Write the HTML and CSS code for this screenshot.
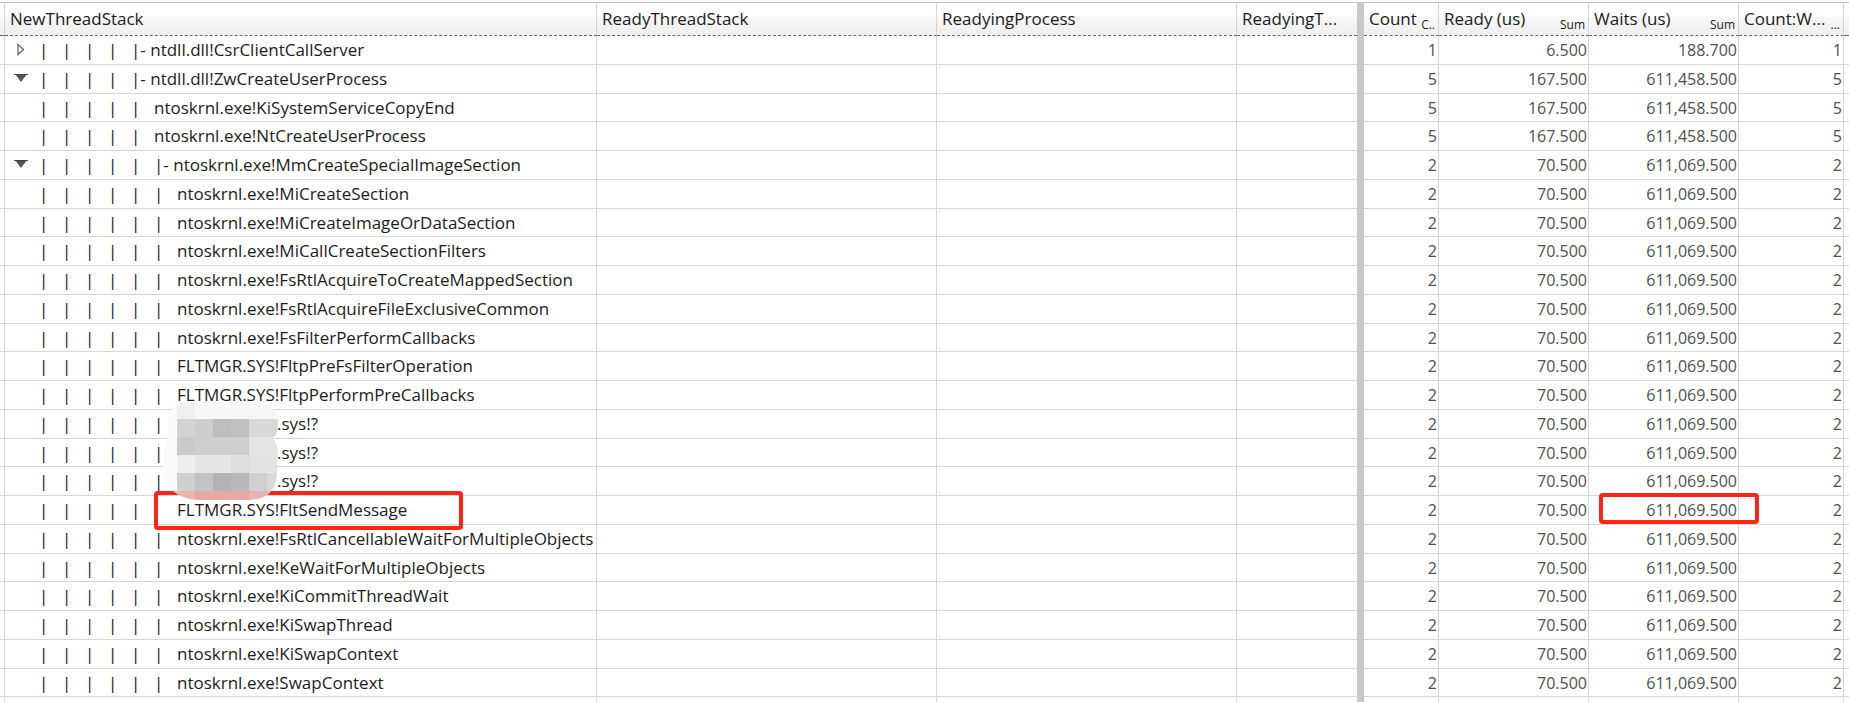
FILE: index.html
```html
<!DOCTYPE html>
<html lang="en">
<head>
<meta charset="utf-8">
<title>Thread stacks</title>
<link rel="stylesheet" href="styles.css">
</head>
<body>
<table class="grid">
<colgroup>
<col class="w-edge"><col class="w-stack"><col class="w-ready-stack"><col class="w-process"><col class="w-thread"><col class="w-split"><col class="w-count"><col class="w-time"><col class="w-time"><col class="w-count-waits"><col class="w-edge">
</colgroup>
<thead>
<tr>
<th></th>
<th scope="col">NewThreadStack</th>
<th scope="col">ReadyThreadStack</th>
<th scope="col">ReadyingProcess</th>
<th scope="col" class="flush">ReadyingT...</th>
<th class="split"></th>
<th scope="col"><div class="head">Count<small>C..</small></div></th>
<th scope="col"><div class="head">Ready (us)<small>Sum</small></div></th>
<th scope="col"><div class="head">Waits (us)<small>Sum</small></div></th>
<th scope="col"><div class="head">Count:W...<small>...</small></div></th>
<th class="flush"></th>
</tr>
</thead>
<tbody>
<tr><td></td><td><div class="node"><button class="toggle" aria-label="Expand"><svg width="14" height="14" viewBox="0 0 14 14"><path d="M4 1.500v10l5.500-5z" fill="#fff" stroke="#666" stroke-width="1.3"/></svg></button><i>|</i><i>|</i><i>|</i><i>|</i><span>|- ntdll.dll!CsrClientCallServer</span></div></td><td></td><td></td><td class="flush"></td><td class="split"></td><td>1</td><td>6.500</td><td>188.700</td><td>1</td><td class="flush"></td></tr>
<tr><td></td><td><div class="node"><button class="toggle" aria-label="Collapse"><svg width="14" height="14" viewBox="0 0 14 14"><path d="M1 2h12L7 10z" fill="#555"/><path d="M0 2.500h14" stroke="#444"/></svg></button><i>|</i><i>|</i><i>|</i><i>|</i><span>|- ntdll.dll!ZwCreateUserProcess</span></div></td><td></td><td></td><td class="flush"></td><td class="split"></td><td>5</td><td>167.500</td><td>611,458.500</td><td>5</td><td class="flush"></td></tr>
<tr><td></td><td><div class="node"><i>|</i><i>|</i><i>|</i><i>|</i><i>|</i><span>ntoskrnl.exe!KiSystemServiceCopyEnd</span></div></td><td></td><td></td><td class="flush"></td><td class="split"></td><td>5</td><td>167.500</td><td>611,458.500</td><td>5</td><td class="flush"></td></tr>
<tr><td></td><td><div class="node"><i>|</i><i>|</i><i>|</i><i>|</i><i>|</i><span>ntoskrnl.exe!NtCreateUserProcess</span></div></td><td></td><td></td><td class="flush"></td><td class="split"></td><td>5</td><td>167.500</td><td>611,458.500</td><td>5</td><td class="flush"></td></tr>
<tr><td></td><td><div class="node"><button class="toggle" aria-label="Collapse"><svg width="14" height="14" viewBox="0 0 14 14"><path d="M1 2h12L7 10z" fill="#555"/><path d="M0 2.500h14" stroke="#444"/></svg></button><i>|</i><i>|</i><i>|</i><i>|</i><i>|</i><span>|- ntoskrnl.exe!MmCreateSpecialImageSection</span></div></td><td></td><td></td><td class="flush"></td><td class="split"></td><td>2</td><td>70.500</td><td>611,069.500</td><td>2</td><td class="flush"></td></tr>
<tr><td></td><td><div class="node"><i>|</i><i>|</i><i>|</i><i>|</i><i>|</i><i>|</i><span>ntoskrnl.exe!MiCreateSection</span></div></td><td></td><td></td><td class="flush"></td><td class="split"></td><td>2</td><td>70.500</td><td>611,069.500</td><td>2</td><td class="flush"></td></tr>
<tr><td></td><td><div class="node"><i>|</i><i>|</i><i>|</i><i>|</i><i>|</i><i>|</i><span>ntoskrnl.exe!MiCreateImageOrDataSection</span></div></td><td></td><td></td><td class="flush"></td><td class="split"></td><td>2</td><td>70.500</td><td>611,069.500</td><td>2</td><td class="flush"></td></tr>
<tr><td></td><td><div class="node"><i>|</i><i>|</i><i>|</i><i>|</i><i>|</i><i>|</i><span>ntoskrnl.exe!MiCallCreateSectionFilters</span></div></td><td></td><td></td><td class="flush"></td><td class="split"></td><td>2</td><td>70.500</td><td>611,069.500</td><td>2</td><td class="flush"></td></tr>
<tr><td></td><td><div class="node"><i>|</i><i>|</i><i>|</i><i>|</i><i>|</i><i>|</i><span>ntoskrnl.exe!FsRtlAcquireToCreateMappedSection</span></div></td><td></td><td></td><td class="flush"></td><td class="split"></td><td>2</td><td>70.500</td><td>611,069.500</td><td>2</td><td class="flush"></td></tr>
<tr><td></td><td><div class="node"><i>|</i><i>|</i><i>|</i><i>|</i><i>|</i><i>|</i><span>ntoskrnl.exe!FsRtlAcquireFileExclusiveCommon</span></div></td><td></td><td></td><td class="flush"></td><td class="split"></td><td>2</td><td>70.500</td><td>611,069.500</td><td>2</td><td class="flush"></td></tr>
<tr><td></td><td><div class="node"><i>|</i><i>|</i><i>|</i><i>|</i><i>|</i><i>|</i><span>ntoskrnl.exe!FsFilterPerformCallbacks</span></div></td><td></td><td></td><td class="flush"></td><td class="split"></td><td>2</td><td>70.500</td><td>611,069.500</td><td>2</td><td class="flush"></td></tr>
<tr><td></td><td><div class="node"><i>|</i><i>|</i><i>|</i><i>|</i><i>|</i><i>|</i><span>FLTMGR.SYS!FltpPreFsFilterOperation</span></div></td><td></td><td></td><td class="flush"></td><td class="split"></td><td>2</td><td>70.500</td><td>611,069.500</td><td>2</td><td class="flush"></td></tr>
<tr><td></td><td><div class="node"><i>|</i><i>|</i><i>|</i><i>|</i><i>|</i><i>|</i><span>FLTMGR.SYS!FltpPerformPreCallbacks</span></div></td><td></td><td></td><td class="flush"></td><td class="split"></td><td>2</td><td>70.500</td><td>611,069.500</td><td>2</td><td class="flush"></td></tr>
<tr><td></td><td class="anchor"><div class="node"><i>|</i><i>|</i><i>|</i><i>|</i><i>|</i><i>|</i><span class="masked">.sys!?</span></div>
<svg class="mosaic" width="116" height="98" viewBox="0 0 116 98" aria-hidden="true">
<defs><clipPath id="blob"><path d="M22 0H92Q115 0 115 24Q115 31 110 36Q115 43 115 52Q115 58 114 62Q117 97 86 98H38Q17 98 5 84Q-2 75 1 62Q-1 48 5 36Q3 0 22 0Z"/></clipPath></defs>
<g clip-path="url(#blob)" shape-rendering="crispEdges">
<path fill="#fafafa" d="M0 0h116v98H0z"/>
<path fill="#f0f0f0" d="M14 0h18v17H14z"/><path fill="#f7f7f7" d="M32 0h84v17H32z"/>
<path fill="#d3d3d3" d="M14 17h18v18H14z"/><path fill="#cdcdcd" d="M32 17h18v18H32z"/><path fill="#bdbdbd" d="M50 17h18v18H50z"/><path fill="#c0c0c0" d="M68 17h18v18H68z"/><path fill="#d9d9d9" d="M86 17h30v18H86z"/>
<path fill="#cacaca" d="M14 35h18v18H14z"/><path fill="#cecece" d="M32 35h54v18H32z"/><path fill="#e5e5e5" d="M86 35h30v18H86z"/>
<path fill="#efefef" d="M14 53h18v18H14z"/><path fill="#e6e6e6" d="M32 53h36v18H32z"/><path fill="#dedede" d="M68 53h18v18H68z"/><path fill="#e3e3e3" d="M86 53h30v18H86z"/>
<path fill="#cfcfcf" d="M14 71h18v18H14z"/><path fill="#c3c3c3" d="M32 71h18v18H32z"/><path fill="#b3b3b3" d="M50 71h18v18H50z"/><path fill="#b9b9b9" d="M68 71h18v18H68z"/><path fill="#d0d0d0" d="M86 71h18v18H86z"/><path fill="#dadada" d="M104 71h12v18h-12z"/>
<path fill="#e8b5b3" d="M0 89h32v9H0z"/><path fill="#e3a9a7" d="M32 89h54v9H32z"/><path fill="#e6b3b1" d="M86 89h30v9H86z"/>
</g></svg></td><td></td><td></td><td class="flush"></td><td class="split"></td><td>2</td><td>70.500</td><td>611,069.500</td><td>2</td><td class="flush"></td></tr>
<tr><td></td><td><div class="node"><i>|</i><i>|</i><i>|</i><i>|</i><i>|</i><i>|</i><span class="masked">.sys!?</span></div></td><td></td><td></td><td class="flush"></td><td class="split"></td><td>2</td><td>70.500</td><td>611,069.500</td><td>2</td><td class="flush"></td></tr>
<tr><td></td><td><div class="node"><i>|</i><i>|</i><i>|</i><i>|</i><i>|</i><i>|</i><span class="masked">.sys!?</span></div></td><td></td><td></td><td class="flush"></td><td class="split"></td><td>2</td><td>70.500</td><td>611,069.500</td><td>2</td><td class="flush"></td></tr>
<tr><td></td><td class="anchor"><div class="node"><i>|</i><i>|</i><i>|</i><i>|</i><i>|</i><i></i><span>FLTMGR.SYS!FltSendMessage</span></div><div class="mark mark-name"></div></td><td></td><td></td><td class="flush"></td><td class="split"></td><td>2</td><td>70.500</td><td class="anchor">611,069.500<div class="mark mark-value"></div></td><td>2</td><td class="flush"></td></tr>
<tr><td></td><td><div class="node"><i>|</i><i>|</i><i>|</i><i>|</i><i>|</i><i>|</i><span>ntoskrnl.exe!FsRtlCancellableWaitForMultipleObjects</span></div></td><td></td><td></td><td class="flush"></td><td class="split"></td><td>2</td><td>70.500</td><td>611,069.500</td><td>2</td><td class="flush"></td></tr>
<tr><td></td><td><div class="node"><i>|</i><i>|</i><i>|</i><i>|</i><i>|</i><i>|</i><span>ntoskrnl.exe!KeWaitForMultipleObjects</span></div></td><td></td><td></td><td class="flush"></td><td class="split"></td><td>2</td><td>70.500</td><td>611,069.500</td><td>2</td><td class="flush"></td></tr>
<tr><td></td><td><div class="node"><i>|</i><i>|</i><i>|</i><i>|</i><i>|</i><i>|</i><span>ntoskrnl.exe!KiCommitThreadWait</span></div></td><td></td><td></td><td class="flush"></td><td class="split"></td><td>2</td><td>70.500</td><td>611,069.500</td><td>2</td><td class="flush"></td></tr>
<tr><td></td><td><div class="node"><i>|</i><i>|</i><i>|</i><i>|</i><i>|</i><i>|</i><span>ntoskrnl.exe!KiSwapThread</span></div></td><td></td><td></td><td class="flush"></td><td class="split"></td><td>2</td><td>70.500</td><td>611,069.500</td><td>2</td><td class="flush"></td></tr>
<tr><td></td><td><div class="node"><i>|</i><i>|</i><i>|</i><i>|</i><i>|</i><i>|</i><span>ntoskrnl.exe!KiSwapContext</span></div></td><td></td><td></td><td class="flush"></td><td class="split"></td><td>2</td><td>70.500</td><td>611,069.500</td><td>2</td><td class="flush"></td></tr>
<tr><td></td><td><div class="node"><i>|</i><i>|</i><i>|</i><i>|</i><i>|</i><i>|</i><span>ntoskrnl.exe!SwapContext</span></div></td><td></td><td></td><td class="flush"></td><td class="split"></td><td>2</td><td>70.500</td><td>611,069.500</td><td>2</td><td class="flush"></td></tr>
</tbody>
<tfoot><tr><td></td><td></td><td></td><td></td><td class="flush"></td><td class="split"></td><td></td><td></td><td></td><td></td><td class="flush"></td></tr></tfoot>
</table>
</body>
</html>
```
FILE: styles.css
```css
body {
  margin: 0;
  padding-top: 2px;
  background: #fff;
  color: #1c1c1c;
  font: 16px/24px "Open Sans", "Noto Sans", sans-serif;
}

.grid {
  width: 100%;
  table-layout: fixed;
  border-collapse: separate;
  border-spacing: 0;
}

.w-edge { width: 5px; }
.w-stack { width: 592px; }
.w-ready-stack { width: 340px; }
.w-thread { width: 120px; }
.w-split { width: 7px; }
.w-count { width: 75px; }
.w-time { width: 150px; }
.w-count-waits { width: 105px; }

th, td {
  box-sizing: border-box;
  padding: 0;
  border-right: 1px solid #d6d6d6;
  white-space: nowrap;
}

th {
  height: 34px;
  padding-left: 5px;
  border-top: 1px solid #c4c4c4;
  border-bottom: 1px dashed #666;
  background: linear-gradient(#fff 0 40%, #f7f7f7 45%, #efefef);
  font-size: 17px;
  font-weight: 400;
  text-align: left;
}

th:first-child, th:last-child { padding: 0; }

.head {
  display: flex;
  justify-content: space-between;
}

small {
  padding: 12px 3px 0 0;
  font-size: 12px;
  line-height: 12px;
}

td {
  height: 29px;
  border-bottom: 1px solid #d6d6d6;
  color: #505050;
  text-align: right;
}

tbody tr:nth-child(4n + 3) td { height: 28px; }

td:nth-child(n + 7) { padding-right: 1px; }

td.flush, th.flush { border-right: 0; }

th.split, td.split {
  padding: 0;
  border: 0;
  background: #c8c8c8;
}

tfoot td {
  height: 5px;
  border-bottom: 0;
}

.node {
  display: flex;
  padding-left: 34px;
  color: #1c1c1c;
  font-size: 17px;
  text-align: left;
}

.node i {
  width: 23px;
  font-style: normal;
}

.node i, .node span { flex: none; }

.masked { padding-left: 100px; }

.toggle {
  display: flex;
  align-items: center;
  width: 25px;
  height: 24px;
  margin-left: -25px;
  padding: 0;
  border: 0;
  background: none;
}

.anchor { position: relative; }

.mark {
  position: absolute;
  z-index: 1;
  box-sizing: border-box;
  border: 4px solid #ff2413;
  border-radius: 4px;
}

.mark-name {
  top: -5px;
  left: 149px;
  width: 309px;
  height: 39px;
}

.mark-value {
  top: -3px;
  right: -21px;
  width: 160px;
  height: 31px;
}

.mosaic {
  position: absolute;
  z-index: 2;
  top: -8px;
  left: 158px;
}
```
